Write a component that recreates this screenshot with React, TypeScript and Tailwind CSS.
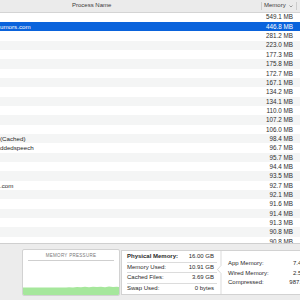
import React from 'react'

const rows = [
  { name: '', mem: '549.1 MB' },
  { name: 'umors.com', mem: '446.8 MB', selected: true },
  { name: '', mem: '281.2 MB' },
  { name: '', mem: '223.0 MB' },
  { name: '', mem: '177.3 MB' },
  { name: '', mem: '175.8 MB' },
  { name: '', mem: '172.7 MB' },
  { name: '', mem: '167.1 MB' },
  { name: '', mem: '134.2 MB' },
  { name: '', mem: '134.1 MB' },
  { name: '', mem: '110.0 MB' },
  { name: '', mem: '107.2 MB' },
  { name: '', mem: '106.0 MB' },
  { name: '(Cached)', mem: '98.4 MB' },
  { name: 'ddedspeech', mem: '96.7 MB' },
  { name: '', mem: '95.7 MB' },
  { name: '', mem: '94.4 MB' },
  { name: '', mem: '93.5 MB' },
  { name: '.com', mem: '92.7 MB' },
  { name: '', mem: '92.1 MB' },
  { name: '', mem: '91.6 MB' },
  { name: '', mem: '91.4 MB' },
  { name: '', mem: '91.3 MB' },
  { name: '', mem: '90.8 MB' },
  { name: '', mem: '90.8 MB' },
]

const stats = [
  { label: 'Physical Memory:', value: '16.00 GB' },
  { label: 'Memory Used:', value: '10.91 GB' },
  { label: 'Cached Files:', value: '3.69 GB' },
  { label: 'Swap Used:', value: '0 bytes' },
]

const breakdown = [
  { label: 'App Memory:', value: '7.43 GB' },
  { label: 'Wired Memory:', value: '2.52 GB' },
  { label: 'Compressed:', value: '987.0 MB' },
]

export default function App() {
  return (
    <div
      className="w-[300px] h-[300px] overflow-hidden bg-white flex flex-col"
      style={{ fontFamily: '"Liberation Sans", Arial, sans-serif' }}
    >
      {/* Column header */}
      <div className="h-[12.5px] shrink-0 bg-[#ebebeb] border-b border-[#d4d4d4] flex items-center text-[6px] text-[#3a3a3a]">
        <div className="w-[261px] pl-[72px]">Process Name</div>
        <span className="w-px h-[8px] bg-[#cdcdcd]" />
        <div className="w-[34px] flex items-center pl-[2px] gap-[3px]">
          <span>Memory</span>
          <svg width="4" height="3" viewBox="0 0 4 3" className="mt-[1px]">
            <polyline points="0.5,0.5 2,2 3.5,0.5" fill="none" stroke="#777" strokeWidth="0.7" />
          </svg>
        </div>
        <span className="w-px h-[8px] bg-[#cdcdcd]" />
      </div>

      {/* Process list */}
      <div className="h-[230.5px] shrink-0 overflow-hidden">
        {rows.map((row, i) => (
          <div
            key={i}
            className={
              row.selected
                ? 'h-[9.35px] flex items-center bg-[#0a63dc] text-white'
                : i % 2 === 1
                ? 'h-[9.35px] flex items-center bg-[#f4f5f5] text-[#1e1e1e]'
                : 'h-[9.35px] flex items-center bg-white text-[#1e1e1e]'
            }
          >
            <div className="w-[262px] text-[6.2px] whitespace-nowrap overflow-hidden">{row.name}</div>
            <div
              className={
                row.selected
                  ? 'w-[31px] text-right text-[6.3px] whitespace-nowrap'
                  : 'w-[31px] text-right text-[6.3px] whitespace-nowrap text-[#2e2e2e]'
              }
            >
              {row.mem}
            </div>
          </div>
        ))}
      </div>

      {/* Memory summary panel */}
      <div className="flex-1 w-[360px] bg-[#ececec] border-t border-[#cfcfcf] flex items-start pl-[22px] pt-[5px]">
        <div className="w-[98px] h-[47px] bg-white border border-[#d2d2d2] rounded-[2px] flex flex-col overflow-hidden">
          <div className="pt-[3px] text-center text-[4.5px] tracking-[0.3px] text-[#777] leading-[5px]">
            MEMORY PRESSURE
          </div>
          <div className="mx-[5px] mt-[2px] h-px bg-[#cfcfcf]" />
          <svg className="mt-auto" width="96" height="9" viewBox="0 0 96 9" preserveAspectRatio="none">
            <path
              d="M0 1.6 L43 1.6 L46 1.2 L50 1.4 L54 0.9 L58 1.3 L62 0.8 L66 1.2 L70 0.7 L74 1.1 L78 0.8 L82 1.2 L86 0.6 L90 1.0 L94 0.8 L96 1.0 L96 9 L0 9 Z"
              fill="#a6e79c"
            />
          </svg>
        </div>

        <div className="ml-[1px] mt-[1px] h-[45px] flex-1 bg-white border border-[#d2d2d2] flex text-[6px] text-[#2a2a2a]">
          <div className="w-[95px] pl-[5px] pt-[1px]">
            {stats.map((s, i) => (
              <div
                key={s.label}
                className={
                  i < 3
                    ? 'h-[10.5px] flex items-center justify-between pr-[3px] border-b border-[#dcdcdc]'
                    : 'h-[10.5px] flex items-center justify-between pr-[3px]'
                }
              >
                <span className={i === 0 ? 'font-bold' : ''}>{s.label}</span>
                <span>{s.value}</span>
              </div>
            ))}
          </div>
          <svg width="5" height="43" viewBox="0 0 5 43" className="shrink-0">
            <polyline
              points="4,0 4,14.5 0.5,18.5 4,22.5 4,43"
              fill="none"
              stroke="#d2d2d2"
              strokeWidth="0.8"
            />
          </svg>
          <div className="pl-[6px] pt-[8px]">
            {breakdown.map((b) => (
              <div key={b.label} className="h-[9.5px] flex items-center">
                <span className="w-[55px] whitespace-nowrap">{b.label}</span>
                <span className="w-[32px] text-right whitespace-nowrap">{b.value}</span>
              </div>
            ))}
          </div>
        </div>
      </div>
    </div>
  )
}
